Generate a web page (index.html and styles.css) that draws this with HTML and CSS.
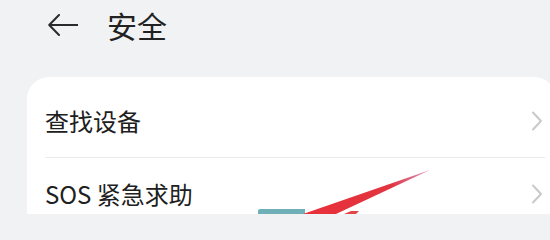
FILE: index.html
```html
<!DOCTYPE html>
<html lang="zh-CN">
<head>
<meta charset="utf-8">
<title>安全</title>
<link rel="stylesheet" href="styles.css">
</head>
<body>
<div class="screen">
  <header class="topbar">
    <svg class="back" width="30" height="22" viewBox="0 0 30 22" aria-hidden="true">
      <path d="M11 1 L1.2 11 L11 21 M1.2 11 H30" fill="none" stroke="#2b2b2b" stroke-width="2" stroke-linecap="round" stroke-linejoin="round"/>
    </svg>
    <h1 class="title">安全</h1>
  </header>
  <section class="card">
    <div class="row">
      <span class="label">查找设备</span>
      <svg class="chev" width="12" height="20" viewBox="0 0 12 20" aria-hidden="true"><path d="M2 1.5 L10 10 L2 18.5" fill="none" stroke="#c9c9c9" stroke-width="2" stroke-linecap="round" stroke-linejoin="round"/></svg>
    </div>
    <div class="divider"></div>
    <div class="row">
      <span class="label">SOS 紧急求助</span>
      <svg class="chev" width="12" height="20" viewBox="0 0 12 20" aria-hidden="true"><path d="M2 1.5 L10 10 L2 18.5" fill="none" stroke="#c9c9c9" stroke-width="2" stroke-linecap="round" stroke-linejoin="round"/></svg>
    </div>
  </section>
  <div class="tab-chip"></div>
  <svg class="annot" width="550" height="214" viewBox="0 0 550 214" aria-hidden="true">
    <defs>
      <linearGradient id="rg" x1="428" y1="171" x2="305" y2="214" gradientUnits="userSpaceOnUse">
        <stop offset="0" stop-color="#c9477a" stop-opacity="0.6"/>
        <stop offset="0.3" stop-color="#e2343f"/>
        <stop offset="1" stop-color="#e8303a"/>
      </linearGradient>
    </defs>
    <polygon points="430,170 336,214 303,214" fill="url(#rg)"/>
    <polygon points="344,214 351,211 359,211 356,214" fill="#e2454a"/>
  </svg>
</div>
</body>
</html>
```

FILE: styles.css
```css
* { box-sizing: border-box; }
html, body {
  margin: 0;
  padding: 0;
  background: #f1f2f4;
}
body {
  width: 550px;
  height: 214px;
  overflow: hidden;
  font-family: "Noto Sans CJK SC", "Noto Sans", sans-serif;
  color: #1f1f1f;
}
.screen {
  position: relative;
  width: 550px;
  height: 214px;
  overflow: hidden;
}
.topbar {
  display: flex;
  align-items: center;
  height: 48px;
  padding-left: 48px;
  padding-top: 1px;
}
.back {
  display: block;
  flex: none;
}
.title {
  margin: 0 0 0 29px;
  font-size: 30px;
  font-weight: 400;
  line-height: 1;
  color: #222;
}
.card {
  margin: 29px -6px 0 27px;
  padding-top: 8px;
  background: #ffffff;
  border-radius: 22px 22px 0 0;
}
.row {
  display: flex;
  align-items: center;
  justify-content: space-between;
  height: 72px;
  padding: 0 13px 0 18px;
}
.label {
  font-size: 24px;
  line-height: 1;
  color: #202020;
}
.chev {
  display: block;
  flex: none;
}
.divider {
  height: 1px;
  margin: 0 11px 0 18px;
  background: #ebebeb;
}
.tab-chip {
  position: absolute;
  left: 258px;
  top: 209px;
  width: 47px;
  height: 5px;
  background: #6fb0b8;
  border-radius: 2px 0 0 0;
}
.annot {
  position: absolute;
  left: 0;
  top: 0;
}
```
